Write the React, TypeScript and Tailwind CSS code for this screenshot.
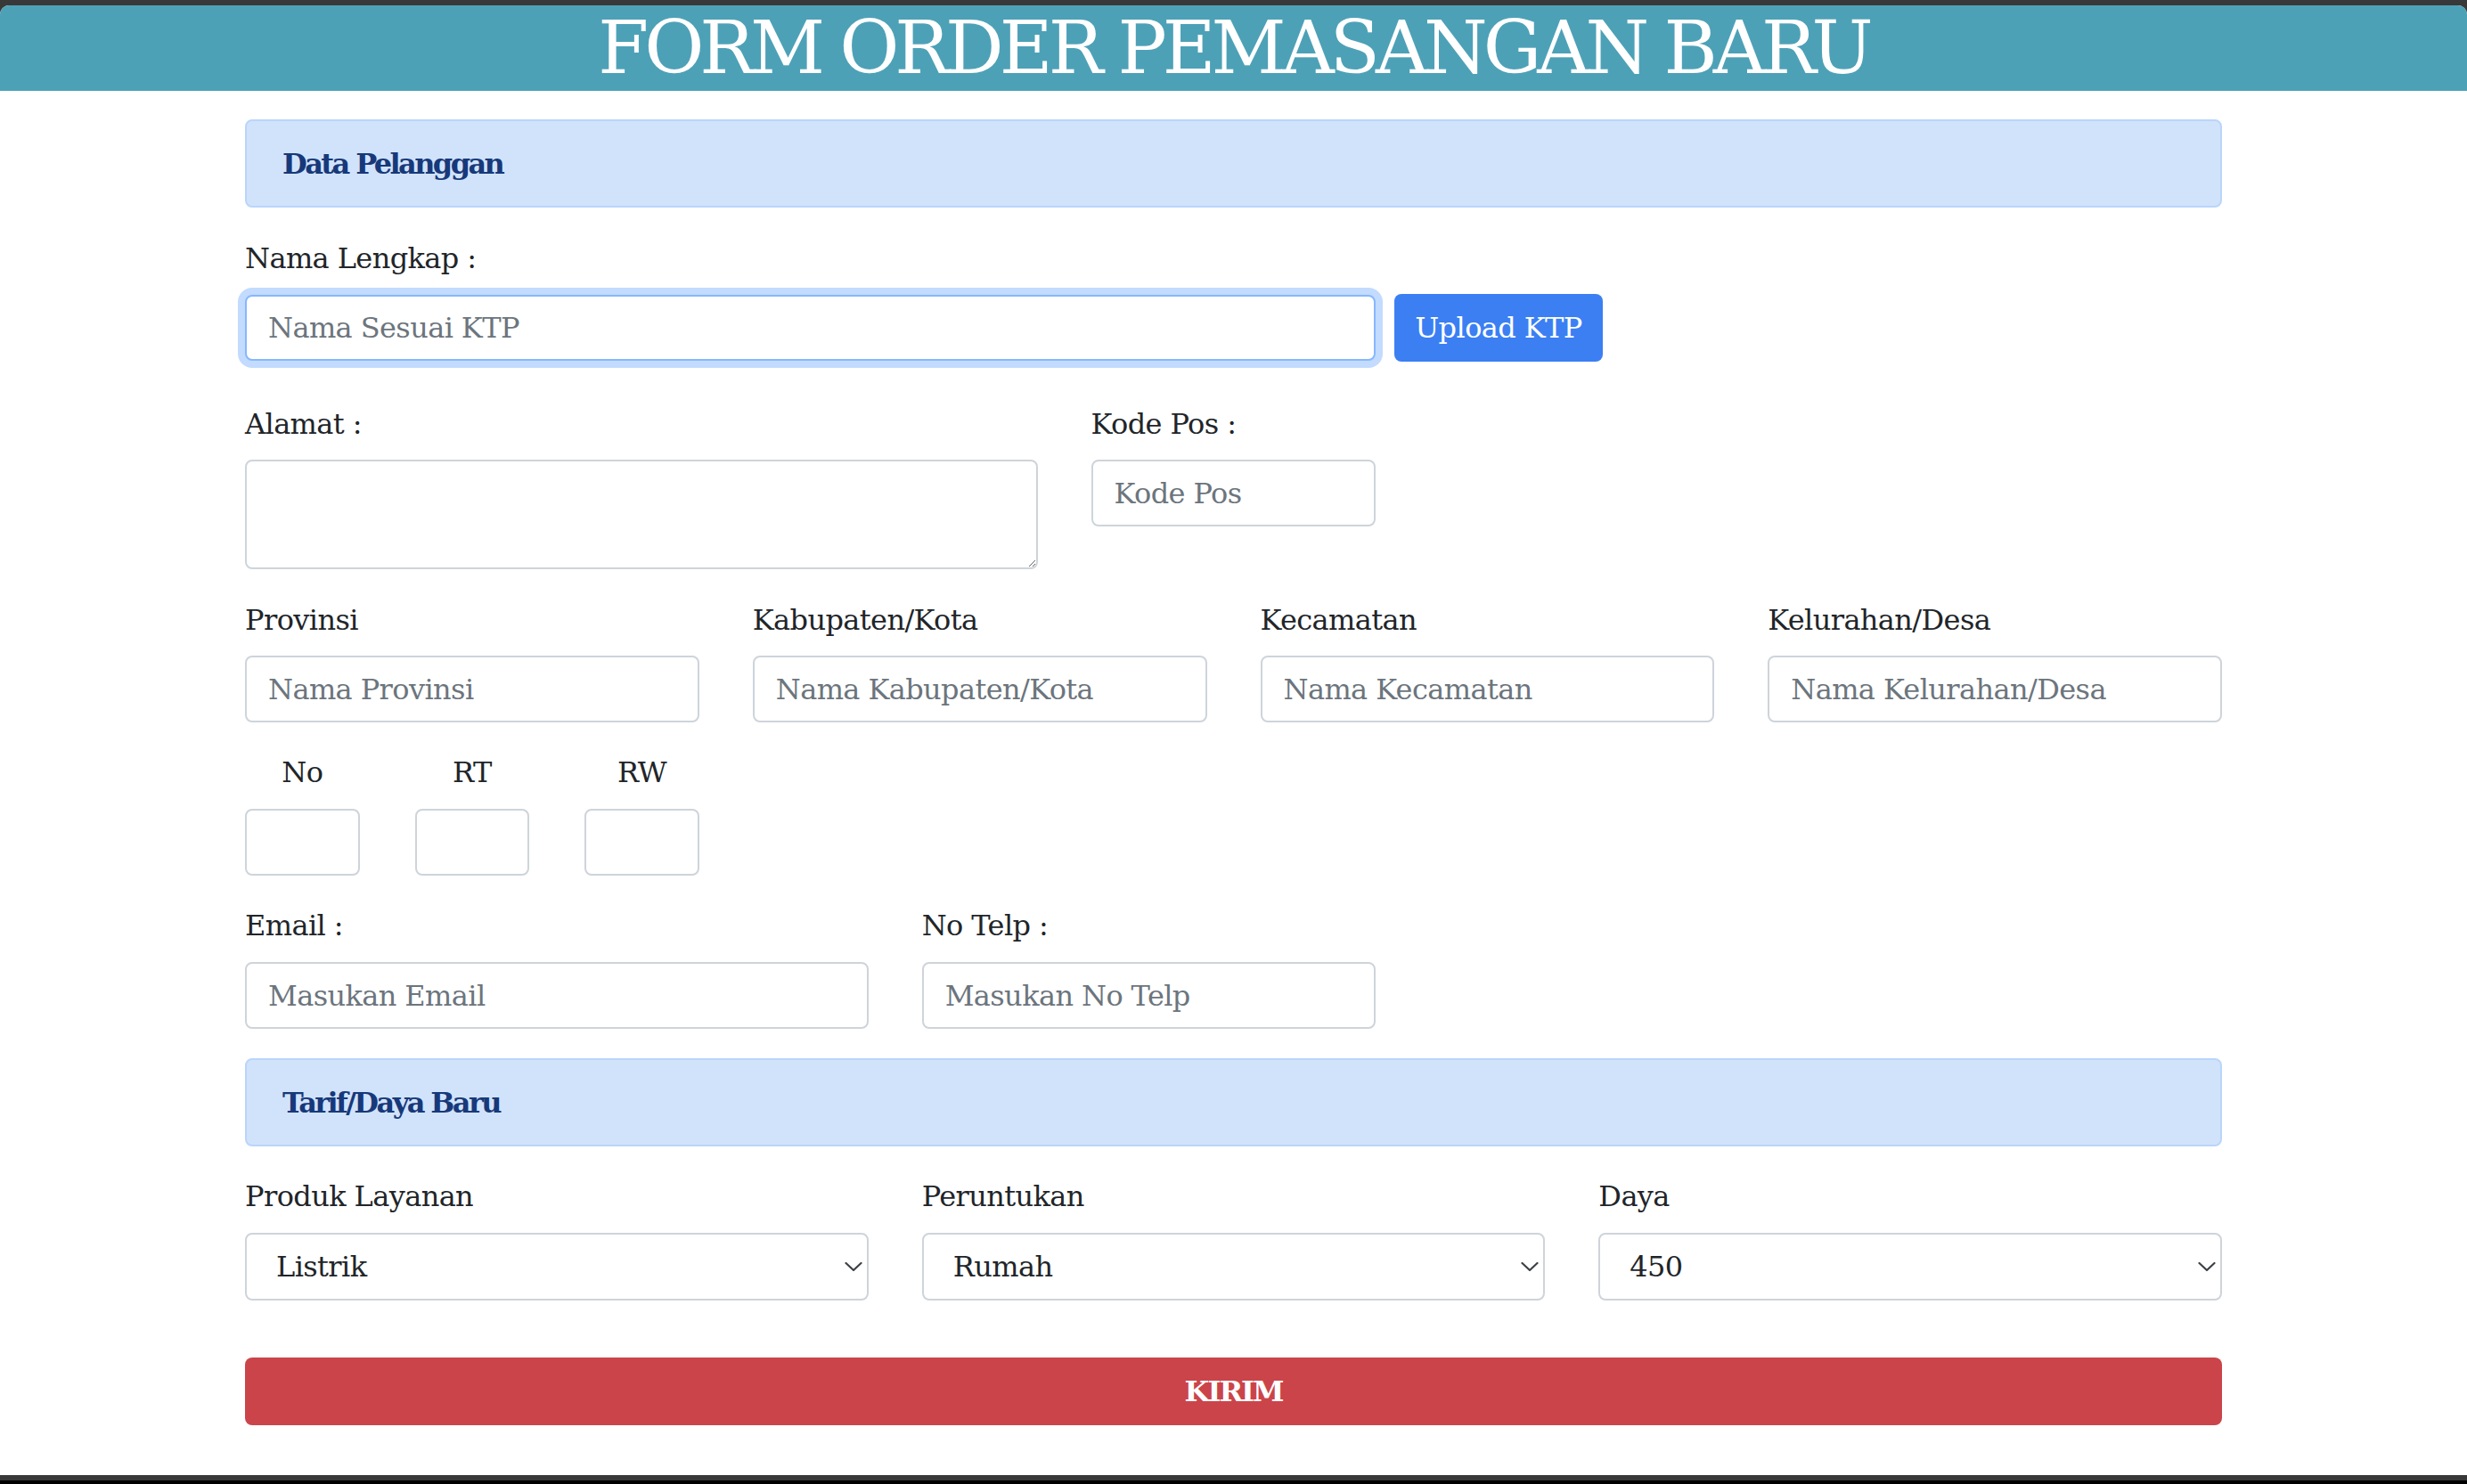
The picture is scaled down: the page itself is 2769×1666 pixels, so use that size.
import React from "react";

const FONT = { fontFamily: '"DejaVu Serif", "Liberation Serif", serif' };

function Label({ children, center = false }: { children: React.ReactNode; center?: boolean }) {
  return (
    <div className={`h-[48px] leading-[48px] text-[32px] tracking-[-0.6px] text-[#212529] mb-[17px] whitespace-nowrap ${center ? "text-center" : ""}`}>
      {children}
    </div>
  );
}

function Input({ placeholder = "", className = "", h = "h-[75px]" }: { placeholder?: string; className?: string; h?: string }) {
  return (
    <input
      type="text"
      placeholder={placeholder}
      className={`block ${h} w-full rounded-[8px] border-2 bg-white px-[24px] text-[32px] tracking-[-0.6px] text-[#212529] placeholder:text-[#6c757d] outline-none ${className || "border-[#ced4da]"}`}
      style={FONT}
    />
  );
}

function Select({ value }: { value: string }) {
  return (
    <div className="relative h-[76px] w-full">
      <select
        defaultValue={value}
        className="block h-[76px] w-full appearance-none rounded-[8px] border-2 border-[#ced4da] bg-white pl-[33px] pr-[40px] text-[32px] tracking-[-0.6px] text-[#212529] outline-none"
        style={FONT}
      >
        <option value={value}>{value}</option>
      </select>
      <svg
        className="pointer-events-none absolute right-[7px] top-1/2 -translate-y-1/2"
        width="20"
        height="11"
        viewBox="0 0 20 11"
        fill="none"
      >
        <path d="M1.5 1.5 L10 9.5 L18.5 1.5" stroke="#3c4146" strokeWidth="2.2" strokeLinecap="round" strokeLinejoin="round" />
      </svg>
    </div>
  );
}

function SectionCard({ title }: { title: string }) {
  return (
    <div className="flex h-[99px] items-center rounded-[8px] border-2 border-[#b9d5fb] bg-[#d1e3fb] pl-[40px]">
      <span className="text-[32px] font-bold tracking-[-2.6px] text-[#17397a]">{title}</span>
    </div>
  );
}

export default function App() {
  return (
    <div className="flex h-[1666px] flex-col bg-[#383838] pt-[6px]" style={FONT}>
      <div className="flex flex-1 flex-col overflow-hidden rounded-t-[10px] bg-white">
        <header className="flex h-[96px] shrink-0 items-center justify-center bg-[#4da1b7]">
          <h1 className="whitespace-nowrap text-[82px] leading-none font-normal tracking-[-5px] text-white">FORM ORDER PEMASANGAN BARU</h1>
        </header>

        <main className="mx-auto w-[2219px] pt-[32px]">
          <SectionCard title="Data Pelanggan" />

          {/* Nama Lengkap */}
          <div className="mt-[33px]">
            <div className="h-[48px] leading-[48px] text-[32px] tracking-[-0.6px] text-[#212529] mb-[16px] whitespace-nowrap">Nama Lengkap :</div>
            <div className="flex items-center">
              <div className="w-[1269px]">
                <Input
                  placeholder="Nama Sesuai KTP"
                  h="h-[74px]"
                  className="border-[#86b7fe] shadow-[0_0_0_8px_rgba(13,110,253,0.25)]"
                />
              </div>
              <button className="ml-[21px] h-[76px] w-[234px] rounded-[8px] bg-[#3b7ff3] text-[32px] tracking-[-0.6px] text-white" style={FONT}>
                Upload KTP
              </button>
            </div>
          </div>

          {/* Alamat / Kode Pos */}
          <div className="mt-[46px] grid grid-cols-12 gap-x-[60px]">
            <div className="col-span-5">
              <div className="h-[48px] leading-[48px] text-[32px] tracking-[-0.6px] text-[#212529] mb-[16px]">Alamat :</div>
              <textarea
                className="block h-[123px] w-full rounded-[8px] border-2 border-[#ced4da] bg-white px-[24px] py-[12px] text-[32px] outline-none"
                style={FONT}
              />
            </div>
            <div className="col-span-2">
              <div className="h-[48px] leading-[48px] text-[32px] tracking-[-0.6px] text-[#212529] mb-[16px]">Kode Pos :</div>
              <Input placeholder="Kode Pos" />
            </div>
          </div>

          {/* Wilayah */}
          <div className="mt-[33px] grid grid-cols-12 gap-x-[60px]">
            {[
              ["Provinsi", "Nama Provinsi"],
              ["Kabupaten/Kota", "Nama Kabupaten/Kota"],
              ["Kecamatan", "Nama Kecamatan"],
              ["Kelurahan/Desa", "Nama Kelurahan/Desa"],
            ].map(([l, p]) => (
              <div key={l} className="col-span-3">
                <div className="h-[48px] leading-[48px] text-[32px] tracking-[-0.6px] text-[#212529] mb-[16px]">{l}</div>
                <Input placeholder={p} />
              </div>
            ))}
          </div>

          {/* No RT RW */}
          <div className="mt-[32px] grid grid-cols-12 gap-x-[60px]">
            <div className="col-span-3 grid grid-cols-3 gap-x-[62px]">
              {["No", "RT", "RW"].map((l) => (
                <div key={l}>
                  <Label center>{l}</Label>
                  <Input />
                </div>
              ))}
            </div>
          </div>

          {/* Email / Telp */}
          <div className="mt-[32px] grid grid-cols-12 gap-x-[60px]">
            <div className="col-span-4">
              <Label>Email :</Label>
              <Input placeholder="Masukan Email" />
            </div>
            <div className="col-span-3">
              <Label>No Telp :</Label>
              <Input placeholder="Masukan No Telp" />
            </div>
          </div>

          <div className="mt-[33px]">
            <SectionCard title="Tarif/Daya Baru" />
          </div>

          {/* Selects */}
          <div className="mt-[32px] grid grid-cols-12 gap-x-[60px]">
            <div className="col-span-4">
              <Label>Produk Layanan</Label>
              <Select value="Listrik" />
            </div>
            <div className="col-span-4">
              <Label>Peruntukan</Label>
              <Select value="Rumah" />
            </div>
            <div className="col-span-4">
              <Label>Daya</Label>
              <Select value="450" />
            </div>
          </div>

          <button
            className="mt-[64px] block h-[76px] w-full rounded-[8px] bg-[#cb444a] text-[32px] font-bold tracking-[-2px] text-white"
            style={FONT}
          >
            KIRIM
          </button>
        </main>
      </div>
      <div className="h-[6px] shrink-0 bg-[#383838]" />
      <div className="h-[4px] shrink-0 bg-black" />
    </div>
  );
}
